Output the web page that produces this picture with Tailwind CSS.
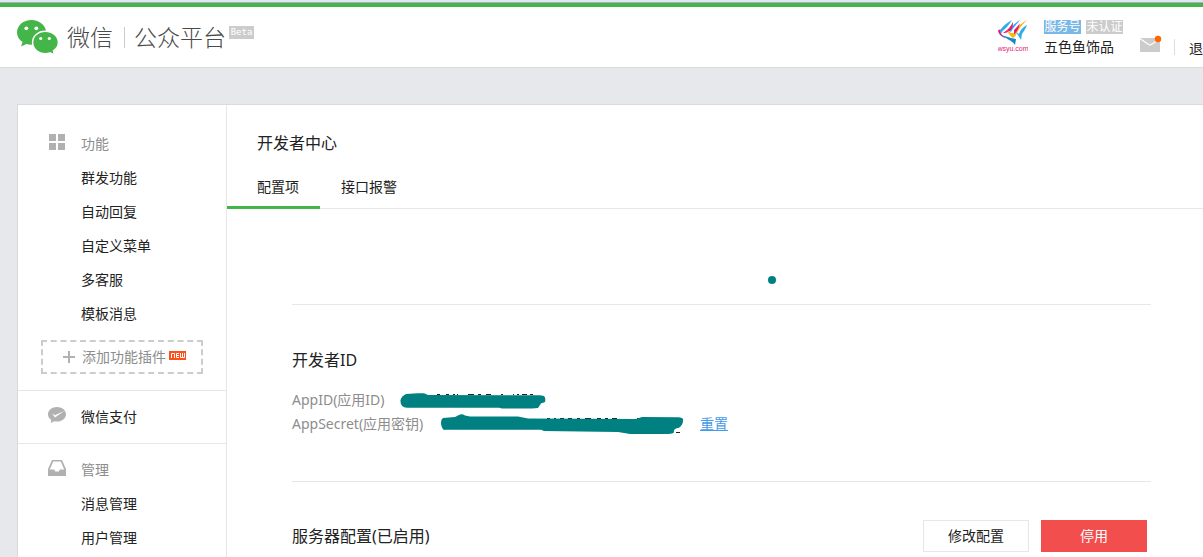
<!DOCTYPE html>
<html lang="zh-CN">
<head>
    <meta charset="UTF-8">
    <meta name="viewport" content="width=device-width, initial-scale=1.0">
    <script src="https://cdn.jsdelivr.net/npm/@tailwindcss/browser@4"></script>
    <title>微信公众平台</title>
</head>
<body class="min-h-screen flex flex-col overflow-x-hidden bg-[#e7e8eb] text-[#222] text-sm font-['Noto_Sans','Noto_Sans_CJK_SC',sans-serif]">

    <!-- header -->
    <div class="h-0.5 bg-[#e0e7f4]"></div>
    <div class="h-px bg-[#b3a9b8]"></div>
    <header class="h-[65px] flex items-start bg-white border-t-4 border-b border-t-[#44b549] border-b-[#d9dadc] pl-[17px] whitespace-nowrap">
        <a href="#" class="flex items-start pt-[13px] text-[#4a4a4a]">
            <svg class="w-[41px] h-[34px]" viewBox="0 0 41 34">
                <path fill="#44b549" d="M14.500 0C6.500 0 0 5.400 0 12.500c0 4 2.200 7.300 5.600 9.600L4 26.600l5.300-2.700c1.700.5 3.400.8 5.400.8 8 0 14.500-5.400 14.500-12.200S22.500 0 14.500 0z"/>
                <path fill="#44b549" stroke="#fff" stroke-width="1.500" d="M28.300 11.300c-7.200 0-12.700 4.900-12.700 11.200s5.600 11.200 12.700 11.200c1.700 0 3.200-.3 4.600-.8l4.900 2-1.300-4c2.900-2 4.900-4.900 4.900-8.400 0-6.300-5.900-11.200-13.100-11.200z"/>
                <circle cx="9.300" cy="8.300" r="1.900" fill="#fff"/>
                <circle cx="19.300" cy="8.300" r="1.900" fill="#fff"/>
                <circle cx="23.700" cy="18.500" r="1.600" fill="#fff"/>
                <circle cx="32.300" cy="18.500" r="1.600" fill="#fff"/>
            </svg>
            <span class="ml-[9px] text-[23px] leading-[34px] font-light">微信</span>
            <span class="ml-[11px] mt-[7px] w-px h-[21px] bg-[#ccc]"></span>
            <span class="ml-[9px] text-[23px] leading-[34px] font-light">公众平台</span>
            <span class="ml-[3px] mt-1.5 w-[25px] h-[13px] bg-[#ccc] text-white text-center text-[9px] leading-[13px] font-['DejaVu_Sans_Mono',monospace]">Beta</span>
        </a>
        <div class="ml-auto flex items-start">
            <svg class="mt-3 w-[30px] h-[35px]" viewBox="0 0 30 35">
                <path fill="#29b0e8" d="M14 1C7 5 3 9 1.500 13c0 1 .5 2 1.500 3 0-2 1-4 4-6 3-3 5-6 7-9z"/>
                <path fill="#e5177b" d="M0 11.500l2.500-1.500-.5 3c1 2 3 4 5.500 6-4-1-7-4-7.500-7.500z"/>
                <path fill="#29b0e8" d="M22 1c-5 3-9 7-11 11l2 1c2-4 6-8 9-12z"/>
                <path fill="#e5177b" d="M15 3c-2 4-5 8-10 11 4 0 8-2 9-5 1-2 1-4 1-6z"/>
                <path fill="#fbb614" d="M29 1c-6 3-11 8-13 13l-3 0-4-3c2 4 3 6 6 8 2-1 3-3 4-5 2-5 6-9 10-13z"/>
                <path fill="#e5177b" d="M22 4c-1 2-4 5-6 7l0 4c3-2 5-6 6-11z"/>
                <path fill="#1587c9" d="M3 16l10 3 5 1-1 6C14 21 8 20 3 16z"/>
                <path fill="#29b0e8" d="M29 6c-4 2-7 5-8 9l-3-2 5 8 1-6c2-3 4-6 5-9z"/>
                <text x="15" y="32" text-anchor="middle" font-family="Liberation Sans, sans-serif" font-size="7" fill="#e5177b">wsyu.com</text>
            </svg>
            <div class="ml-4 mt-[13px] w-20">
                <div class="flex gap-[5px] text-white text-xs leading-[14px]">
                    <span class="w-[37px] h-3.5 text-center bg-[#7ab8e6]">服务号</span>
                    <span class="w-[37px] h-3.5 text-center bg-[#ccc]">未认证</span>
                </div>
                <a href="#" class="block mt-0.5 leading-[22px]">五色鱼饰品</a>
            </div>
            <a href="#" class="ml-4 mt-7" aria-label="通知">
                <svg class="w-[22px] h-[17px]" viewBox="0 3 22 17">
                    <path fill="#ccc" d="M0 6h20v14H0z"/>
                    <path fill="none" stroke="#fff" stroke-width="1.200" d="M0 6.500l7 5 3 1.500 3-1.500 4-3"/>
                    <circle cx="18" cy="7" r="3.200" fill="#f60"/>
                </svg>
            </a>
            <span class="ml-3 mt-8 w-px h-4 bg-[#ddd]"></span>
            <a href="#" class="ml-3.5 mt-8 leading-5">退</a>
        </div>
    </header>

    <div class="mt-9 ml-[17px] grow flex bg-white border-t border-l border-[#d9dadc]">
        <!-- sidebar -->
        <nav class="w-[209px] shrink-0 border-r border-[#e7e7eb] leading-[34px]">
            <section class="pt-[22px] pb-4 border-b border-[#e7e7eb]">
                <h2 class="flex pl-[31px] text-[#8d8d8d]">
                    <svg class="mt-[7px] mr-4 w-4 h-4" viewBox="0 0 16 16" fill="#b1b1b1">
                        <path d="M0 0h7v7H0zM9 0h7v7H9zM0 9h7v7H0zM9 9h7v7H9z"/>
                    </svg>
                    功能
                </h2>
                <a href="#" class="block pl-[63px]">群发功能</a>
                <a href="#" class="block pl-[63px]">自动回复</a>
                <a href="#" class="block pl-[63px]">自定义菜单</a>
                <a href="#" class="block pl-[63px]">多客服</a>
                <a href="#" class="block pl-[63px]">模板消息</a>
                <a href="#" class="mt-[9px] mx-[23px] h-[34px] flex items-center border-2 border-dashed border-[#ccc] pl-5 text-[#8d8d8d]">
                    <svg class="mr-[7px] w-3 h-3" viewBox="0 0 12 12">
                        <path fill="#b1b1b1" d="M5 0h2v5h5v2H7v5H5V7H0V5h5z"/>
                    </svg>
                    <span>添加功能插件</span>
                    <svg class="ml-[3px] mb-1 w-[17px] h-[9px]" viewBox="0 0 17 9" role="img" aria-label="NEW">
                        <path fill="#ff4e1a" d="M0 0h17v9H0z"/>
                        <path fill="none" stroke="#fff" d="M2.500 7V2.500h3V7M10 2.500H7.500v4H10M7.500 4.500H10M11.500 2v4.500h4V2M13.500 2v4"/>
                    </svg>
                </a>
            </section>
            <section class="py-[9px] border-b border-[#e7e7eb]">
                <a href="#" class="flex pl-[30px]">
                    <svg class="mt-[7px] mr-[15px] w-[18px] h-4" viewBox="0 0 18 16">
                        <path fill="#b1b1b1" d="M9 0C4 0 0 3.200 0 7.300c0 2.300 1.200 4.300 3.200 5.700L2.800 16l3.400-1.700c.9.200 1.800.3 2.800.3 5 0 9-3.200 9-7.300S14 0 9 0z"/>
                        <path fill="#fff" d="M4 6.500l3 1.700L16.500 3.800 7 10.600z"/>
                    </svg>
                    微信支付
                </a>
            </section>
            <section class="py-[9px]">
                <h2 class="flex pl-[30px] text-[#8d8d8d]">
                    <svg class="mt-[7px] mr-[15px] w-[18px] h-4" viewBox="0 0 18 16">
                        <path fill="#b1b1b1" fill-rule="evenodd" d="M4 0h10l4 9v7H0V9zM5.200 1.500L1.800 9.500h4.400l1 2h3.600l1-2h4.400l-3.400-8z"/>
                    </svg>
                    管理
                </h2>
                <a href="#" class="block pl-[63px]">消息管理</a>
                <a href="#" class="block pl-[63px]">用户管理</a>
            </section>
        </nav>

        <!-- content -->
        <main class="grow">
            <h1 class="pt-[26px] pl-[30px] text-base leading-6">开发者中心</h1>
            <div class="mt-[13px] flex border-b border-[#e7e7eb] leading-[38px]">
                <a href="#" class="-mb-px pl-[30px] pr-[21px] border-b-3 border-[#44b549]">配置项</a>
                <a href="#" class="px-[21px]">接口报警</a>
            </div>
            <div class="pl-[65px] pr-[52px]">
                <div class="h-24 flex justify-center pt-[67px] pl-[101px] border-b border-[#e7e7eb]">
                    <span class="size-2 rounded-full bg-[#008080]"></span>
                </div>

                <section class="pt-[43px] pb-[45px] border-b border-[#e7e7eb] leading-6">
                    <h2 class="text-base leading-6">开发者ID</h2>
                    <dl class="mt-4 text-[#8d8d8d]">
                        <div class="flex">
                            <dt class="w-[108px]">AppID(应用ID)</dt>
                            <dd>
                                <svg class="w-[147px] h-6" viewBox="0 0 147 24">
                                    <path stroke="#222" d="M24 6.500h2M37 6.500h3M46 6.500h3M53 6.500h2M57 6.500h1M68 6.500h6M78 6.500h3M86 6.500h5M101 6.500h2M113 6.500h1M117 6.500h2M122 6.500h5M130 6.500h3"/>
                                    <path fill="#008080" d="M6 6l12-.800 6 0 4 1.800 92 .300 20 0 4 .700q2 2 1 6l-4 1.500-3 4.500-6 .600-30 0-3-.900-92 0Q0 19 .500 12q1-4 5.500-6z"/>
                                </svg>
                            </dd>
                        </div>
                        <div class="flex">
                            <dt class="w-[148px]">AppSecret(应用密钥)</dt>
                            <dd>
                                <svg class="w-[245px] h-6" viewBox="0 0 245 24">
                                    <path stroke="#222" d="M107 6.500h3M114 6.500h2M120 6.500h4M128 6.500h4M137 6.500h3M145 6.500h6M157 6.500h4M165 6.500h3M172 6.500h5M184 7.500h3M197 6.500h3M236 20.500h4"/>
                                    <path fill="#008080" d="M3 6l12-1 4-2q3-1.500 6 .500l5 1 48 0 10 2 108 .500 6-2 36 .300q6 0 5 3.500 0 4-4 7-6 1-5 4.500-1 1.500-6 1.600l-38 0-12-1.800-74-1.100-3-1.200-96 0Q3 18.500 1.500 14 0 8 3 6z"/>
                                </svg>
                            </dd>
                            <dd class="ml-[15px]"><a href="#" class="text-[#459ae9] underline">重置</a></dd>
                        </div>
                    </dl>
                </section>

                <section class="flex items-center pt-[38px] pr-1 leading-[30px]">
                    <h2 class="text-base">服务器配置(已启用)</h2>
                    <button type="button" class="ml-auto w-[106px] h-8 border border-[#e7e7eb] bg-white leading-[30px]">修改配置</button>
                    <button type="button" class="ml-3 w-[106px] h-8 bg-[#f24e4e] text-white leading-8">停用</button>
                </section>
            </div>
        </main>
    </div>

</body>
</html>
